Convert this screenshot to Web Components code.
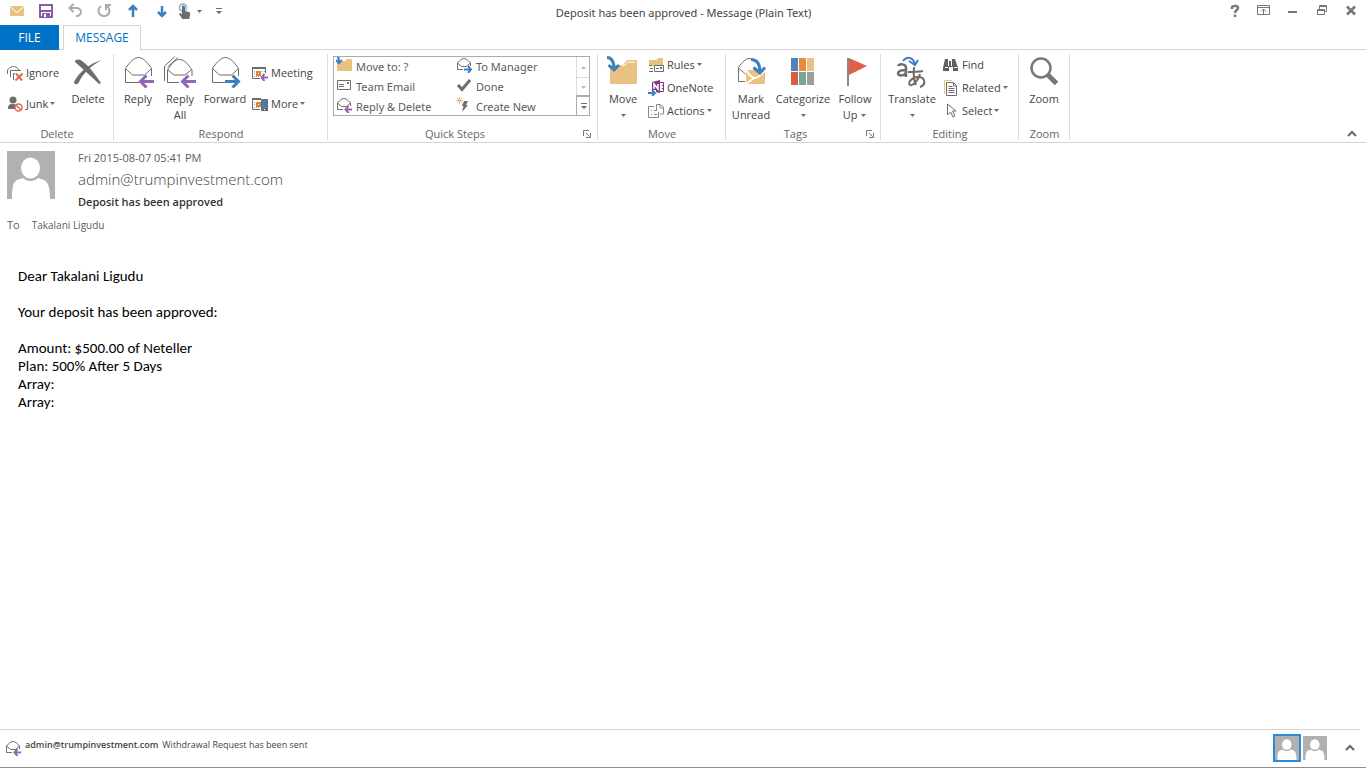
<!DOCTYPE html>
<html lang="en">
<head>
<meta charset="utf-8">
<title>Deposit has been approved - Message (Plain Text)</title>
<style>
    html, body {
        margin: 0;
        height: 100%;
    }
    body {
        background: #fff;
        color: #444;
        font-family: "Open Sans", "Noto Sans", sans-serif;
        font-size: 11px;
        line-height: 16px;
    }
</style>
</head>
<body>
<mail-window></mail-window>

<script>
    const GREY = '#6d6d6d';
    const PURPLE = '#9266b5';
    const BLUE = '#3f7fbc';
    const SAND = '#e9c282';

    // pieces shared by several icons
    const envelope = `<path fill="none" stroke="${GREY}" d="M17 26.5H3.5v-14C8 5.5 12.5 1.5 16.5 1.5s8.5 4 13 11V20M3.5 12.5l7 6.5h12l7-6.5"/>`;
    const arrowLeft = `<path fill="none" stroke="${PURPLE}" stroke-width="3" d="M32 25.5H18M24.5 19.5l-6 6 6 6"/>`;
    const arrowRight = `<path fill="none" stroke="${BLUE}" stroke-width="3" d="M16 25.5h14M23.5 19.5l6 6-6 6"/>`;
    const smallEnvelope = `<path fill="none" stroke="${GREY}" d="M7 12.5H1.5V6C4 3 6 1.5 8 1.5S12 3 14.5 6v3M1.5 6l4 3.500h5l4-3.500"/>`;
    const smallLeft = `<path fill="none" stroke="${PURPLE}" stroke-width="2" d="M16 12.5H9.500M12.500 9l-3 3.500 3 3.500"/>`;
    const smallRight = `<path fill="none" stroke="${BLUE}" stroke-width="2" d="M8 12.5h6.5M12 9l3 3.500-3 3.500"/>`;
    const person = `<path fill="#b1b1b1" d="M0 0h48v48H0z"/><ellipse cx="23.5" cy="17" rx="9.5" ry="10.5" fill="#fff"/><path fill="#fff" d="M5 48c0-12 1-17 5-19l6-2c3 4 12 4 15 0l6 2c4 2 6 7 6 19z"/>`;
    const calendar = `<path fill="none" stroke="${GREY}" d="M8 13.5H.5v-11h13V8"/><path fill="${GREY}" d="M0 2h14v2H0z"/><path fill="none" stroke="#aaa" stroke-dasharray="1 1" d="M2 6.5h11M2 8.5h11M2 11.5h6"/><path fill="#fff" stroke="#e08433" stroke-width="2" d="M5 7h3v3H5z"/>`;

    const ICONS = {
        mail: [16, 16, `<path fill="${SAND}" d="M1 3h14v10H1z"/><path fill="none" stroke="#fff" d="M1 3.500l7 6 7-6"/>`],
        save: [16, 16, `<path fill="none" stroke="#8b5aa8" stroke-width="2" d="M2 2h12v12H2z"/><path fill="#8b5aa8" d="M3 7h10v2H3zM4 10h8v4H4z"/><path fill="#fff" d="M6 11h2v3H6z"/>`],
        undo: [16, 16, `<path fill="none" stroke="#ababab" stroke-width="2" d="M6.500 1L2.500 5l4 4M3 5h6c3 0 5 2 5 4s-2 4-4 4H9"/>`],
        redo: [16, 16, `<path fill="none" stroke="#ababab" stroke-width="2" d="M5 3a5.500 5.500 0 1 0 6 0M10 7V2h5"/>`],
        up: [16, 16, `<path fill="none" stroke="${BLUE}" stroke-width="2.500" d="M8 14V3.500M4 7l4-4 4 4"/>`],
        down: [16, 16, `<path fill="none" stroke="${BLUE}" stroke-width="2.500" d="M8 3v10M4 9l4 4 4-4"/>`],
        touch: [16, 16, `<circle cx="6" cy="4.500" r="3.500" fill="none" stroke="#9cc0df" stroke-width="2"/><path fill="${GREY}" d="M5 4c0-2 3-2 3 0v4l4 1c2 0 1 4 0 8H6l-4-6 1-1 2 1z"/>`],
        customize: [8, 8, `<path fill="${GREY}" d="M1 1h6v1H1zM1 4h6L4 7z"/>`],
        caret: [7, 7, `<path fill="${GREY}" d="M1 2h5L3.500 5z"/>`],
        caretUp: [7, 7, `<path fill="#bbb" d="M1 5h5L3.500 2z"/>`],
        caretLight: [7, 7, `<path fill="#bbb" d="M1 2h5L3.500 5z"/>`],
        help: [16, 16, `<path fill="none" stroke="#777" stroke-width="2.500" d="M5 6V4.500C5 3 6 3 8 3s3 0 3 2-3 2-3 5M8 11.500v2.500"/>`],
        ribbonOptions: [16, 16, `<path fill="none" stroke="#777" d="M1.500 2.500h12v9h-12zM1 4.500h13M7.500 11V6M5 8.500L7.500 6 10 8.500"/>`],
        minimize: [16, 16, `<path fill="#777" d="M3 8h9v2H3z"/>`],
        restore: [16, 16, `<path fill="none" stroke="#777" d="M3.500 6.500h7v5h-7zM3 7.500h8M5.500 6V2.500h7v6H11M5 3.500h8"/>`],
        close: [16, 16, `<path fill="none" stroke="#777" stroke-width="2.500" d="M4 3.500l8 8M12 3.500l-8 8"/>`],
        chevron: [10, 8, `<path fill="none" stroke="#666" stroke-width="2" d="M1 6l4-4 4 4"/>`],
        launcher: [8, 8, `<path fill="none" stroke="#777" d="M.5 6V.5H6M3 3l3.500 3.500M7.500 3v4.500H3"/>`],

        ignore: [16, 16, `<path fill="none" stroke="${GREY}" d="M.5 9V5C3 2 5 1.500 6.500 1.500S10 2 12 5M3.500 12V5.500H14M6.500 15V8.500h9"/><path fill="#fff" d="M8 8h8v8H8z"/><path fill="none" stroke="#df6a4e" stroke-width="2" d="M9 8.500l6 7M15.500 8.500l-7 7"/>`],
        junk: [16, 16, `<circle cx="6" cy="4" r="3.500" fill="${GREY}"/><path fill="${GREY}" d="M1 13c0-4 1-5 5-5 3 0 4 1 4 2v3z"/><circle cx="11.500" cy="11.500" r="3.500" fill="#fff" stroke="#df6a4e" stroke-width="1.500"/><path stroke="#df6a4e" stroke-width="1.500" d="M9 9l5 5"/>`],
        del: [32, 32, `<path fill="${GREY}" d="M3 6c0-3 4-3 7-1 7 5 13 13 19 22l-2 1C20 21 12 14 3 6z"/><path fill="${GREY}" d="M30 4C20 9 11 17 7 26c-1 3-5 3-5 0C7 16 18 7 30 4z"/>`],
        reply: [32, 32, envelope + arrowLeft],
        replyAll: [32, 32, `<path fill="none" stroke="${GREY}" d="M.5 25V10L11 .5M3.500 11L14 1.500M15 26.500H3.500V14C8 7 11 3.500 15.500 3.500s8 3.500 12.500 10.500V20M4 14l6 5h11l6-5"/>` + arrowLeft],
        forward: [32, 32, envelope + arrowRight],
        meeting: [16, 16, calendar + `<path fill="#fff" d="M9.500 8h7v8h-7z"/>` + smallLeft],
        more: [16, 16, calendar + `<path fill="#fff" d="M9 2h7v14H9z"/><path fill="${BLUE}" stroke="${GREY}" d="M9.500 3.500h6v11h-6z"/><path fill="${GREY}" d="M9 12h7v3H9z"/><path fill="#fff" d="M12 13h1v1h-1z"/>`],
        moveTo: [16, 16, `<path fill="${SAND}" d="M1 4h8l2-2h5v12H1z"/><path fill="none" stroke="${BLUE}" stroke-width="2" d="M1 0c2 0 2 2 2 6M0 3l3 3 3-3"/>`],
        team: [16, 16, `<path fill="#fff" stroke="${GREY}" d="M1.500 3.500h13v9h-13z"/><path stroke="${GREY}" d="M3 7.500h5M3 9.500h5"/><path fill="${BLUE}" d="M11 5h2v2h-2z"/>`],
        replySmall: [16, 16, smallEnvelope + smallLeft],
        forwardSmall: [16, 16, smallEnvelope + smallRight],
        done: [16, 16, `<path fill="none" stroke="${GREY}" stroke-width="3" d="M2 8l4 4.500L14 3"/>`],
        create: [16, 16, `<path fill="${GREY}" d="M8 4h4l-2 4h2l-6 7 1.500-6H6z"/><path stroke="${SAND}" d="M3.500 0v7M0 3.500h7M1 1l5 5M6 1L1 6"/>`],
        move: [32, 32, `<path fill="${SAND}" d="M3 9h13l4-5h10v24H3z"/><path fill="none" stroke="#fff" d="M15 10l3-1 3-3h7"/><path fill="none" stroke="${BLUE}" stroke-width="3" d="M0 1.500c5 0 7 4 7 12M1.500 9L7 14l5-5"/>`],
        rules: [16, 16, `<path fill="${SAND}" d="M1 3h7l2-2h5v8H1z"/><path fill="#fff" stroke="${GREY}" d="M6.500 8.500h9v6h-9z"/><path stroke="${GREY}" d="M8 11.500h3M1 8.500h3M2 11.500h3M1 14.500h4"/><path fill="${BLUE}" d="M12 10h2v2h-2z"/>`],
        onenote: [16, 16, `<path fill="#80397b" d="M4 2l8-2v13l-8-2z"/><path fill="none" stroke="#80397b" d="M12 2.500h3.500v9H12M14 5.500h2M14 8.500h2"/><path fill="none" stroke="#fff" stroke-width="1.500" d="M6 9V4l4 5V4"/><path fill="#fff" d="M0 10h8v6H0z"/><path fill="none" stroke="${BLUE}" stroke-width="2" d="M0 13h7M4 10l3 3-3 3"/>`],
        actions: [16, 16, `<path fill="none" stroke="#888" d="M6 3.500H.5v11h10V9M8.500 8V1.500h4l3 2.500v7H12M12 2v3h3M3 7.500h1M3 11.500h1M6 7.500h3M6 11.500h3"/>`],
        unread: [32, 32, `<path fill="none" stroke="${GREY}" d="M10 25.500H3.500v-14C7 6 11 2.500 14 2.500S18 4 20 6M3.500 12l7 6"/><path fill="${SAND}" d="M11 14h19v14H11z"/><path fill="none" stroke="#fff" stroke-width="2" d="M11 14c5 8 8 8 9 8s4 0 10-8M11 28l8-6"/><path fill="none" stroke="${BLUE}" stroke-width="3" d="M16 3.500c6 0 9 4 9 13M18.500 11.500l6.500 5.500 5-5.500"/>`],
        categorize: [32, 32, `<path fill="#4f82b8" d="M4 2h7v13H4z"/><path fill="#e78b3d" d="M12 2h7v13h-7z"/><path fill="${SAND}" d="M20 2h7v13h-7z"/><path fill="#d9603f" d="M4 16h7v13H4z"/><path fill="#74a893" d="M12 16h7v13h-7z"/><path fill="#9d9d9d" d="M20 16h7v13h-7z"/>`],
        flag: [32, 32, `<path fill="#888" d="M8 2h2v28H8z"/><path fill="#de6243" d="M10 2l18 8-18 9z"/>`],
        translate: [32, 32, `<g fill="none" stroke="${GREY}" stroke-width="2"><path d="M2 10c1-2 8-3 8 2v9M10 14c-5 0-8 1-8 3.500s6 3 8-1" stroke-width="2.500"/><path d="M12 16c5 0 10 0 15-1M18 11c-1 10 0 14 2 18M24 18c-2 7-7 12-10 11-3-2 2-8 8-8 8 0 8 8 2 10"/></g><path fill="none" stroke="${BLUE}" stroke-width="2" d="M7 5c4-5 10-4 12 3M13 5l6 4 3-5"/>`],
        find: [16, 16, `<path fill="#5e5e5e" d="M2 2h3v2h4V2h3l3 9v3h-5v-4H6v4H0v-3z"/><path stroke="#fff" d="M2 10.500h3M11 10.500h3M5.500 4v5M8.500 4v5"/>`],
        related: [16, 16, `<path fill="none" stroke="${SAND}" d="M1.500 14V.5H9"/><path fill="#fff" stroke="${GREY}" d="M3.500 2.500h7l3 3v10h-10zM10.500 3v3h3M5.500 6.500h4M5.500 8.500h6M5.500 10.500h6M5.500 12.500h6"/>`],
        select: [16, 16, `<path fill="#fff" stroke="${GREY}" d="M4.500 1v11l3-3 2.500 5 2-1-2.500-5H13z"/>`],
        zoom: [32, 32, `<circle cx="13" cy="12" r="9.500" fill="none" stroke="#777" stroke-width="2.500"/><path stroke="#777" stroke-width="5" d="M19.500 18.500l9 9"/>`],
        person: [48, 48, person]
    };

    class MailIcon extends HTMLElement {
        constructor() {
            super();
            this.attachShadow({ mode: 'open' });
        }
        connectedCallback() {
            const [w, h, art] = ICONS[this.getAttribute('name')];
            const size = this.getAttribute('size');
            this.shadowRoot.innerHTML = `
                <style>
                    :host { display: inline-flex; flex: none; }
                    svg { display: block; }
                </style>
                <svg width="${size || w}" height="${size || h}" viewBox="0 0 ${w} ${h}" aria-hidden="true">${art}</svg>
            `;
        }
    }

    // Icon only, used in the title bar and for the chevrons
    class IconButton extends HTMLElement {
        constructor() {
            super();
            this.attachShadow({ mode: 'open' });
        }
        connectedCallback() {
            this.shadowRoot.innerHTML = `
                <style>
                    :host { display: flex; width: var(--button-width, 29px); height: var(--button-height, 24px); }
                    button {
                        flex: 1;
                        display: flex;
                        align-items: center;
                        justify-content: center;
                        padding: 0;
                        border: 0;
                        background: none;
                    }
                    button:hover { background: #cde6f7; }
                </style>
                <button type="button" aria-label="${this.getAttribute('label')}"><mail-icon name="${this.getAttribute('icon')}"></mail-icon></button>
            `;
        }
    }

    class RibbonButton extends HTMLElement {
        constructor() {
            super();
            this.attachShadow({ mode: 'open' });
        }
        connectedCallback() {
            const caret = this.hasAttribute('menu') ? '<mail-icon name="caret"></mail-icon>' : '';
            this.shadowRoot.innerHTML = `
                <style>
                    :host { display: block; }
                    button {
                        display: flex;
                        align-items: center;
                        gap: 3px;
                        height: 23px;
                        padding: 0;
                        border: 0;
                        background: none;
                        color: #444;
                        font: inherit;
                        white-space: nowrap;
                    }
                    button:hover { background: #cde6f7; }
                    .label { display: flex; align-items: center; gap: 1px; }
                    :host([large]) button {
                        width: 100%;
                        height: 70px;
                        flex-direction: column;
                    }
                    :host([large]) .label { display: block; text-align: center; }
                    /* the arrow of a large button sits on its own line */
                    :host([large]) .label > mail-icon {
                        display: flex;
                        height: 16px;
                        align-items: center;
                        justify-content: center;
                    }
                </style>
                <button type="button">
                    <mail-icon name="${this.getAttribute('icon')}"></mail-icon>
                    <span class="label"><slot></slot>${caret}</span>
                </button>
            `;
        }
    }

    class RibbonGroup extends HTMLElement {
        constructor() {
            super();
            this.attachShadow({ mode: 'open' });
        }
        connectedCallback() {
            const name = this.getAttribute('name');
            const launcher = this.hasAttribute('launcher')
                ? `<icon-button icon="launcher" label="${name} options"></icon-button>` : '';
            this.shadowRoot.innerHTML = `
                <style>
                    :host {
                        display: flex;
                        flex-direction: column;
                        justify-content: space-between;
                        flex: none;
                        box-sizing: border-box;
                        height: 86px;
                        padding: 0 2px 0 3px;
                        border-right: 1px solid #dcdcdc;
                    }
                    .tools { display: flex; align-items: flex-start; padding-top: 2px; }
                    footer {
                        display: flex;
                        height: 12px;
                        color: #666;
                        text-align: center;
                        line-height: 12px;
                    }
                    footer span { flex: 1; }
                    icon-button { --button-width: 16px; --button-height: 12px; }
                </style>
                <div class="tools"><slot></slot></div>
                <footer><span>${name}</span>${launcher}</footer>
            `;
        }
    }

    class QuickSteps extends HTMLElement {
        constructor() {
            super();
            const steps = [
                ['moveTo', 'Move to: ?'], ['forwardSmall', 'To Manager'],
                ['team', 'Team Email'], ['done', 'Done'],
                ['replySmall', 'Reply &amp; Delete'], ['create', 'Create New']
            ];
            const shadow = this.attachShadow({ mode: 'open' });
            shadow.innerHTML = `
                <style>
                    :host {
                        display: flex;
                        box-sizing: border-box;
                        height: 60px;
                        border: 1px solid #ababab;
                        overflow: hidden;
                    }
                    .steps {
                        display: grid;
                        grid-template-columns: 120px 120px;
                        grid-auto-rows: 20px;
                        padding-left: 2px;
                    }
                    .steps button {
                        display: flex;
                        gap: 4px;
                        padding: 0;
                        border: 0;
                        background: none;
                        color: #5c5c5c;
                        font: inherit;
                        font-family: "Noto Sans", sans-serif;
                        line-height: 20px;
                    }
                    .scroll {
                        display: grid;
                        grid-template-rows: 20px 19px 19px;
                        border-left: 1px solid #dcdcdc;
                    }
                    .scroll icon-button {
                        --button-width: 13px;
                        --button-height: auto;
                    }
                    .scroll icon-button + icon-button { border-top: 1px solid #dcdcdc; }
                    .scroll icon-button:last-child { border-color: #ababab; outline: 1px solid #ababab; }
                </style>
                <div class="steps">
                    ${steps.map(([icon, text]) => `<button type="button"><mail-icon name="${icon}"></mail-icon>${text}</button>`).join('')}
                </div>
                <div class="scroll">
                    <icon-button icon="caretUp" label="Row up"></icon-button>
                    <icon-button icon="caretLight" label="Row down"></icon-button>
                    <icon-button icon="customize" label="More quick steps"></icon-button>
                </div>
            `;
        }
    }

    class TitleBar extends HTMLElement {
        constructor() {
            super();
            const shadow = this.attachShadow({ mode: 'open' });
            shadow.innerHTML = `
                <style>
                    :host {
                        display: grid;
                        grid-template-columns: 1fr auto 1fr;
                        height: 25px;
                        padding: 0 1px 0 2px;
                    }
                    .tools { display: flex; height: 23px; }
                    .tools icon-button { --button-height: 22px; }
                    .touch { --button-width: 16px; margin-left: 1px; }
                    .narrow { --button-width: 12px; }
                    .last { --button-width: 12px; margin-left: 8px; }
                    h1 {
                        margin: 0;
                        font-family: "Noto Sans", sans-serif;
                        font-size: 11px;
                        font-weight: 400;
                        line-height: 26px;
                    }
                    .controls { justify-content: flex-end; }
                </style>
                <div class="tools">
                    <icon-button icon="mail" label="Message"></icon-button>
                    <icon-button icon="save" label="Save"></icon-button>
                    <icon-button icon="undo" label="Undo"></icon-button>
                    <icon-button icon="redo" label="Redo"></icon-button>
                    <icon-button icon="up" label="Previous item"></icon-button>
                    <icon-button icon="down" label="Next item"></icon-button>
                    <icon-button class="touch" icon="touch" label="Touch mode"></icon-button>
                    <icon-button class="narrow" icon="caret" label="Touch mode menu"></icon-button>
                    <icon-button class="last" icon="customize" label="Customize toolbar"></icon-button>
                </div>
                <h1>Deposit has been approved - Message (Plain Text)</h1>
                <div class="tools controls">
                    <icon-button icon="help" label="Help"></icon-button>
                    <icon-button icon="ribbonOptions" label="Ribbon display options"></icon-button>
                    <icon-button icon="minimize" label="Minimize"></icon-button>
                    <icon-button icon="restore" label="Restore"></icon-button>
                    <icon-button icon="close" label="Close"></icon-button>
                </div>
            `;
        }
    }

    class MailRibbon extends HTMLElement {
        constructor() {
            super();
            const shadow = this.attachShadow({ mode: 'open' });
            shadow.innerHTML = `
                <style>
                    :host { display: block; }
                    nav {
                        display: flex;
                        gap: 4px;
                        height: 25px;
                        box-shadow: inset 0 -1px #d4d4d4;
                    }
                    nav button {
                        padding: 0;
                        border: 0;
                        font: inherit;
                        font-size: 12px;
                    }
                    .file { width: 59px; background: #0072c6; color: #fff; }
                    .message {
                        width: 78px;
                        border: 1px solid #d4d4d4;
                        border-bottom: 0;
                        background: #fff;
                        color: #0072c6;
                    }
                    .groups {
                        display: flex;
                        height: 88px;
                        padding-top: 4px;
                        border-bottom: 1px solid #d4d4d4;
                    }
                    .small { display: grid; grid-auto-rows: 23px; margin-top: -3px; padding-left: 3px; }
                    .pair { grid-auto-rows: 31px; align-items: center; margin-top: 1px; }
                    .w42 { width: 42px; }
                    .w44 { width: 44px; }
                    .w48 { width: 48px; }
                    .w56 { width: 56px; }
                    .w60 { width: 60px; }
                    .g114 { width: 114px; }
                    .g214 { width: 214px; }
                    .g270 { width: 270px; }
                    .g128 { width: 128px; }
                    .g155 { width: 155px; }
                    .g138 { width: 138px; }
                    .g51 { width: 51px; }
                    quick-steps { width: 257px; margin-left: 2px; }
                    .first { padding-left: 4px; width: 59px; }
                    .collapse { --button-width: 16px; --button-height: 16px; margin: auto 6px 0 auto; }
                </style>
                <nav>
                    <button type="button" class="file">FILE</button>
                    <button type="button" class="message">MESSAGE</button>
                </nav>
                <div class="groups">
                    <ribbon-group name="Delete" class="g114">
                        <div class="small pair first">
                            <ribbon-button icon="ignore">Ignore</ribbon-button>
                            <ribbon-button icon="junk" menu>Junk</ribbon-button>
                        </div>
                        <ribbon-button large icon="del" class="w44">Delete</ribbon-button>
                    </ribbon-group>
                    <ribbon-group name="Respond" class="g214">
                        <ribbon-button large icon="reply" class="w42">Reply</ribbon-button>
                        <ribbon-button large icon="replyAll" class="w42">Reply<br>All</ribbon-button>
                        <ribbon-button large icon="forward" class="w48">Forward</ribbon-button>
                        <div class="small pair">
                            <ribbon-button icon="meeting">Meeting</ribbon-button>
                            <ribbon-button icon="more" menu>More</ribbon-button>
                        </div>
                    </ribbon-group>
                    <ribbon-group name="Quick Steps" launcher class="g270">
                        <quick-steps></quick-steps>
                    </ribbon-group>
                    <ribbon-group name="Move" class="g128">
                        <ribbon-button large icon="move" menu class="w44">Move</ribbon-button>
                        <div class="small">
                            <ribbon-button icon="rules" menu>Rules</ribbon-button>
                            <ribbon-button icon="onenote">OneNote</ribbon-button>
                            <ribbon-button icon="actions" menu>Actions</ribbon-button>
                        </div>
                    </ribbon-group>
                    <ribbon-group name="Tags" launcher class="g155">
                        <ribbon-button large icon="unread" class="w44">Mark<br>Unread</ribbon-button>
                        <ribbon-button large icon="categorize" menu class="w60">Categorize</ribbon-button>
                        <ribbon-button large icon="flag" class="w44">Follow<br>Up <mail-icon name="caret"></mail-icon></ribbon-button>
                    </ribbon-group>
                    <ribbon-group name="Editing" class="g138">
                        <ribbon-button large icon="translate" menu class="w56">Translate</ribbon-button>
                        <div class="small">
                            <ribbon-button icon="find">Find</ribbon-button>
                            <ribbon-button icon="related" menu>Related</ribbon-button>
                            <ribbon-button icon="select" menu>Select</ribbon-button>
                        </div>
                    </ribbon-group>
                    <ribbon-group name="Zoom" class="g51">
                        <ribbon-button large icon="zoom" class="w44">Zoom</ribbon-button>
                    </ribbon-group>
                    <icon-button class="collapse" icon="chevron" label="Collapse the ribbon"></icon-button>
                </div>
            `;
        }
    }

    class MessageHeader extends HTMLElement {
        constructor() {
            super();
            const shadow = this.attachShadow({ mode: 'open' });
            shadow.innerHTML = `
                <style>
                    :host { display: block; padding: 7px 7px 0; color: #5c5c5c; }
                    .sender { display: flex; gap: 23px; }
                    .sender > mail-icon { padding-top: 1px; }
                    .lines { display: grid; gap: 2px; }
                    .from { color: #444; font-size: 15px; font-weight: 300; line-height: 22px; }
                    h2 { margin: 0; padding-top: 2px; color: #333; font-size: 11px; font-weight: 600; line-height: 16px; }
                    dl { display: flex; gap: 12px; margin: 7px 0 0; }
                    dd { margin: 0; font-size: 10px; }
                </style>
                <div class="sender">
                    <mail-icon name="person"></mail-icon>
                    <div class="lines">
                        <time datetime="2015-08-07T17:41"><slot name="date"></slot></time>
                        <div class="from"><slot name="from"></slot></div>
                        <h2><slot name="subject"></slot></h2>
                    </div>
                </div>
                <dl><dt>To</dt><dd><slot name="to"></slot></dd></dl>
            `;
        }
    }

    class MessageBody extends HTMLElement {
        constructor() {
            super();
            const shadow = this.attachShadow({ mode: 'open' });
            shadow.innerHTML = `
                <style>
                    :host {
                        display: block;
                        padding: 34px 18px 0;
                        color: #000;
                        font-family: Carlito, Lato, sans-serif;
                        font-size: 15px;
                        line-height: 18px;
                    }
                    ::slotted(p) { margin: 0 0 18px; }
                </style>
                <slot></slot>
            `;
        }
    }

    class PeoplePane extends HTMLElement {
        constructor() {
            super();
            const shadow = this.attachShadow({ mode: 'open' });
            shadow.innerHTML = `
                <style>
                    :host { display: block; border-bottom: 1px solid #8c8c8c; color: #444; }
                    .bar {
                        display: flex;
                        align-items: center;
                        height: 36px;
                        margin-right: 6px;
                        padding: 0 2px 1px 5px;
                        border-top: 1px solid #d4d4d4;
                        font-size: 9px;
                    }
                    p { margin: 0 auto 6px 4px; }
                    b { margin-right: 4px; font-weight: 600; }
                    .person {
                        display: flex;
                        padding: 2px;
                        border: 0;
                        background: #b1b1b1 content-box;
                    }
                    .current { background: #2a8dd4; }
                    .chevron { --button-width: 16px; --button-height: 24px; margin-left: 13px; }
                </style>
                <div class="bar">
                    <mail-icon name="replySmall"></mail-icon>
                    <p><b>admin@trumpinvestment.com</b>Withdrawal Request has been sent</p>
                    <button type="button" class="person current" aria-label="admin@trumpinvestment.com"><mail-icon name="person" size="24"></mail-icon></button>
                    <button type="button" class="person" aria-label="Takalani Ligudu"><mail-icon name="person" size="24"></mail-icon></button>
                    <icon-button class="chevron" icon="chevron" label="Expand people pane"></icon-button>
                </div>
            `;
        }
    }

    class MailWindow extends HTMLElement {
        constructor() {
            super();
            const shadow = this.attachShadow({ mode: 'open' });
            shadow.innerHTML = `
                <style>
                    :host { display: flex; flex-direction: column; min-height: 100vh; }
                    message-body { flex: 1; }
                </style>
                <title-bar></title-bar>
                <mail-ribbon></mail-ribbon>
                <message-header>
                    <span slot="date">Fri 2015-08-07 05:41 PM</span>
                    <span slot="from">admin@trumpinvestment.com</span>
                    <span slot="subject">Deposit has been approved</span>
                    <span slot="to">Takalani Ligudu</span>
                </message-header>
                <message-body>
                    <p>Dear Takalani Ligudu</p>
                    <p>Your deposit has been approved:</p>
                    <p>Amount: $500.00 of Neteller<br>Plan: 500% After 5 Days<br>Array:<br>Array:</p>
                </message-body>
                <people-pane></people-pane>
            `;
        }
    }

    customElements.define('mail-icon', MailIcon);
    customElements.define('icon-button', IconButton);
    customElements.define('ribbon-button', RibbonButton);
    customElements.define('ribbon-group', RibbonGroup);
    customElements.define('quick-steps', QuickSteps);
    customElements.define('title-bar', TitleBar);
    customElements.define('mail-ribbon', MailRibbon);
    customElements.define('message-header', MessageHeader);
    customElements.define('message-body', MessageBody);
    customElements.define('people-pane', PeoplePane);
    customElements.define('mail-window', MailWindow);
</script>
</body>
</html>
